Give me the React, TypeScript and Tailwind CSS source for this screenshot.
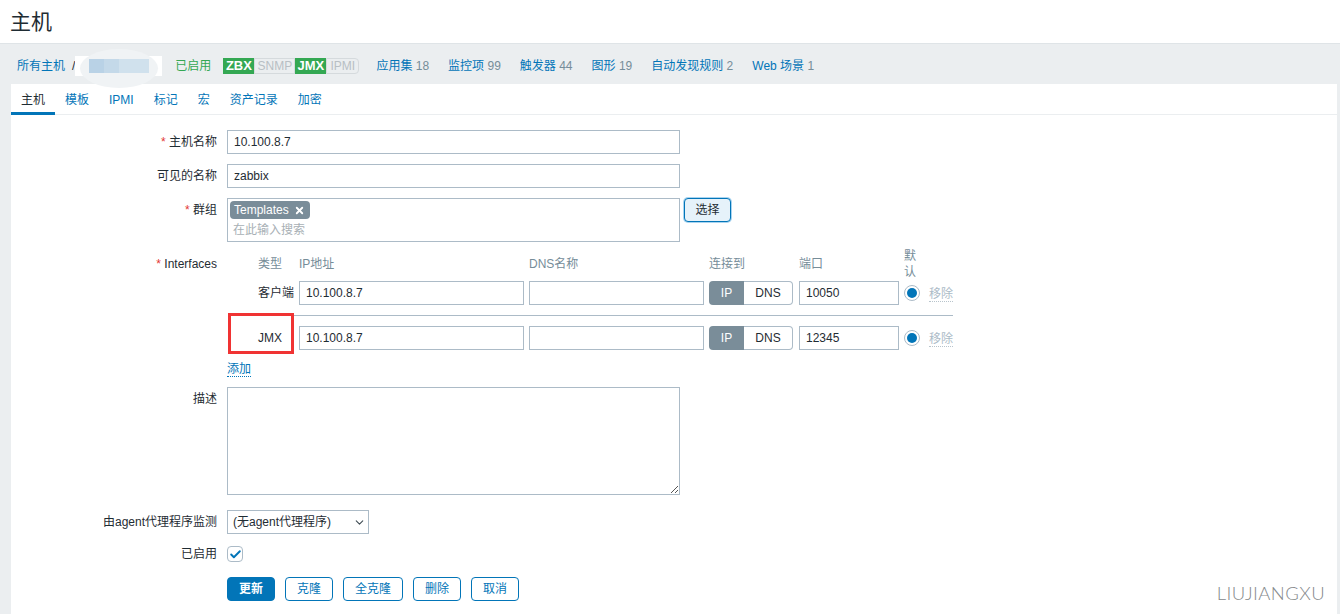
import { Check, ChevronDown, X } from "lucide-react";

const font = "font-['Liberation_Sans','Noto_Sans_CJK_SC',sans-serif]";
const inputCls =
  "h-6 border border-[#acbbc7] bg-white px-[6px] text-xs leading-[22px] text-[#1f2c33] flex items-center";

const navLinks = [
  ["应用集", "18"],
  ["监控项", "99"],
  ["触发器", "44"],
  ["图形", "19"],
  ["自动发现规则", "2"],
  ["Web 场景", "1"],
];

const tabs = ["主机", "模板", "IPMI", "标记", "宏", "资产记录", "加密"];

function Label({ text, required }: { text: string; required?: boolean }) {
  return (
    <div className="w-[206px] shrink-0 text-right text-xs leading-6 text-[#1f2c33]">
      {required ? <span className="text-[#e33734]">* </span> : null}
      {text}
    </div>
  );
}

function Status({ text, w, on, last }: { text: string; w: string; on?: boolean; last?: boolean }) {
  return (
    <span
      className={
        on
          ? `flex h-4 items-center justify-center bg-[#34a853] text-[13px] font-bold text-white ${w}`
          : `flex h-4 items-center justify-center border border-[#d5dadd] bg-[#ebeef0] text-xs text-[#b8bfc4] ${w} ${last ? "rounded-r-sm" : ""}`
      }
    >
      {text}
    </span>
  );
}

function InterfaceRow({ type, port, boxed }: { type: string; port: string; boxed?: boolean }) {
  return (
    <div className="flex h-6 items-center">
      <div className="relative w-[67px] shrink-0 pr-[12px] text-right text-xs text-[#1f2c33]">
        {type === "JMX" ? <span>{type}</span> : <span className="-mr-[12px]">{type}</span>}
        {boxed ? (
          <div className="absolute left-[1px] top-[-17px] h-[41px] w-[66px] border-[3px] border-[#f03333]" />
        ) : null}
      </div>
      <div className={`${inputCls} ml-[5px] w-[225px]`}>10.100.8.7</div>
      <div className={`${inputCls} ml-[5px] w-[175px]`} />
      <div className="ml-[5px] flex h-6 w-[84px] text-xs">
        <div className="flex w-[35px] items-center justify-center rounded-l-sm bg-[#7a8d99] text-white">IP</div>
        <div className="flex flex-1 items-center justify-center rounded-r-sm border border-l-0 border-[#acbbc7] text-[#1f2c33]">
          DNS
        </div>
      </div>
      <div className={`${inputCls} ml-[6px] w-[100px]`}>{port}</div>
      <div className="ml-[5px] flex h-4 w-4 items-center justify-center rounded-full border border-[#acbbc7] bg-white">
        <div className="h-[10px] w-[10px] rounded-full bg-[#0275b8]" />
      </div>
      <span className="ml-[9px] mt-[3px] border-b border-dotted border-[#b8c4cc] text-xs leading-[14px] text-[#acbbc7]">移除</span>
    </div>
  );
}

function FooterButton({ text, w, primary }: { text: string; w: string; primary?: boolean }) {
  return (
    <div
      className={`flex h-6 items-center justify-center rounded-sm border border-[#0275b8] text-xs ${w} ${
        primary ? "bg-[#0275b8] font-bold text-white" : "bg-white text-[#0275b8]"
      }`}
    >
      {text}
    </div>
  );
}

export default function App() {
  return (
    <div className={`${font} relative h-[614px] w-[1340px] overflow-hidden bg-[#ebeef0] text-xs`}>
      <header className="flex h-[44px] items-center border-b border-[#dfe4e7] bg-white pl-[10px]">
        <h1 className="text-[21px] font-normal leading-none text-[#1f2c33]">主机</h1>
      </header>

      <nav className="flex h-[40px] items-center pl-[17px] pt-[3px] text-xs">
        <span className="text-[#0275b8]">所有主机</span>
        <span className="ml-[7px] text-[#1f2c33]">/</span>
        {/* hostname is smudged out in the picture */}
        <div className="relative flex h-5 w-[87px] items-center justify-center bg-white">
          <div className="absolute left-[5px] top-[-7px] h-[39px] w-[78px] rounded-[50%] bg-[#f0f3f5]" />
          <div className="relative flex h-[14px] w-[60px]">
            <div className="w-[15px] bg-[#b9d2e6]" />
            <div className="w-[15px] bg-[#c4d9e9]" />
            <div className="w-[30px] bg-[#d0e1ed]" />
          </div>
        </div>
        <span className="ml-[13px] text-[#34a853]">已启用</span>
        <div className="ml-[12px] flex">
          <Status text="ZBX" w="w-[31px]" on />
          <Status text="SNMP" w="w-[41px]" />
          <Status text="JMX" w="w-[31px]" on />
          <Status text="IPMI" w="w-[33px]" last />
        </div>
        <div className="ml-[17px] flex gap-[19px]">
          {navLinks.map(([name, count]) => (
            <span key={name} className="text-[#0275b8]">
              {name} <span className="text-[#768d99]">{count}</span>
            </span>
          ))}
        </div>
      </nav>

      <main className="ml-[11px] mr-[3px] h-[530px] bg-white">
        <div className="flex h-[31px] border-b border-[#ebeef0] text-xs">
          {tabs.map((t, i) => (
            <div
              key={t}
              className={`flex h-[31px] items-center px-[10px] ${
                i === 0 ? "border-b-[3px] border-[#0275b8] pt-[3px] text-[#1f2c33]" : "text-[#0275b8]"
              }`}
            >
              {t}
            </div>
          ))}
        </div>

        <form className="pt-[15px]">
          <div className="flex">
            <Label text="主机名称" required />
            <div className={`${inputCls} ml-[10px] w-[453px]`}>10.100.8.7</div>
          </div>
          <div className="mt-[10px] flex">
            <Label text="可见的名称" />
            <div className={`${inputCls} ml-[10px] w-[453px]`}>zabbix</div>
          </div>
          <div className="mt-[10px] flex">
            <Label text="群组" required />
            <div className="ml-[10px] h-11 w-[453px] border border-[#acbbc7] px-[2px] pt-[2px]">
              <div className="flex h-[18px] w-20 items-center justify-between rounded-sm bg-[#7a8d99] pl-1 pr-[5px] text-xs text-white">
                Templates
                <X size={11} strokeWidth={4} />
              </div>
              <div className="mt-[3px] pl-[3px] text-xs leading-[17px] text-[#a8b0b5]">在此输入搜索</div>
            </div>
            <div className="ml-[4px] flex h-6 w-[47px] items-center justify-center rounded-sm border border-[#0275b8] bg-[#e6f2fa] text-xs text-[#1f2c33] shadow-[0_0_0_1px_#a9d4f0]">
              选择
            </div>
          </div>

          <div className="mt-[10px] flex">
            <Label text="Interfaces" required />
            <div className="ml-[10px] w-[726px]">
              <div className="flex h-[29px] text-xs text-[#768d99]">
                <div className="w-[55px] pt-[4px] text-right">类型</div>
                <div className="ml-[17px] w-[230px] pt-[4px]">IP地址</div>
                <div className="w-[180px] pt-[4px]">DNS名称</div>
                <div className="w-[90px] pt-[4px]">连接到</div>
                <div className="w-[105px] pt-[4px]">端口</div>
                <div className="-mt-[4px] h-[33px] w-[14px] leading-[16px]">默认</div>
              </div>
              <InterfaceRow type="客户端" port="10050" />
              <div className="ml-[67px] mt-[10px] w-[659px] border-t border-[#acbbc7]" />
              <div className="mt-[10px]">
                <InterfaceRow type="JMX" port="12345" boxed />
              </div>
              <div className="mt-[11px] h-[15px]">
                <span className="border-b border-dotted border-[#0275b8] text-xs leading-[14px] text-[#0275b8]">添加</span>
              </div>
            </div>
          </div>

          <div className="mt-[11px] flex">
            <Label text="描述" />
            <div className="relative ml-[10px] h-[108px] w-[453px] border border-[#acbbc7]">
              <svg className="absolute bottom-0 right-0" width="10" height="10" viewBox="0 0 10 10">
                <path d="M9 2 2 9M9 6 6 9" stroke="#555" strokeWidth="1" fill="none" />
              </svg>
            </div>
          </div>

          <div className="mt-[15px] flex">
            <Label text="由agent代理程序监测" />
            <div className={`${inputCls} ml-[10px] w-[142px] justify-between !pl-[5px] !pr-[2px]`}>
              (无agent代理程序)
              <ChevronDown size={13} strokeWidth={2} className="text-[#3f4c54]" />
            </div>
          </div>
          <div className="mt-[8px] flex items-center">
            <Label text="已启用" />
            <div className="ml-[10px] flex h-4 w-4 items-center justify-center rounded-sm border border-[#acbbc7]">
              <Check size={13} strokeWidth={3.5} className="text-[#0275b8]" />
            </div>
          </div>
          <div className="ml-[216px] mt-[11px] flex gap-[10px]">
            <FooterButton text="更新" w="w-12" primary />
            <FooterButton text="克隆" w="w-12" />
            <FooterButton text="全克隆" w="w-[60px]" />
            <FooterButton text="删除" w="w-12" />
            <FooterButton text="取消" w="w-12" />
          </div>
        </form>
      </main>

      <div className="absolute bottom-[12px] right-[15px] font-['Lato',sans-serif] text-[18.5px] font-light leading-none tracking-[0.4px] text-[#85898b]">
        LIUJIANGXU
      </div>
    </div>
  );
}
